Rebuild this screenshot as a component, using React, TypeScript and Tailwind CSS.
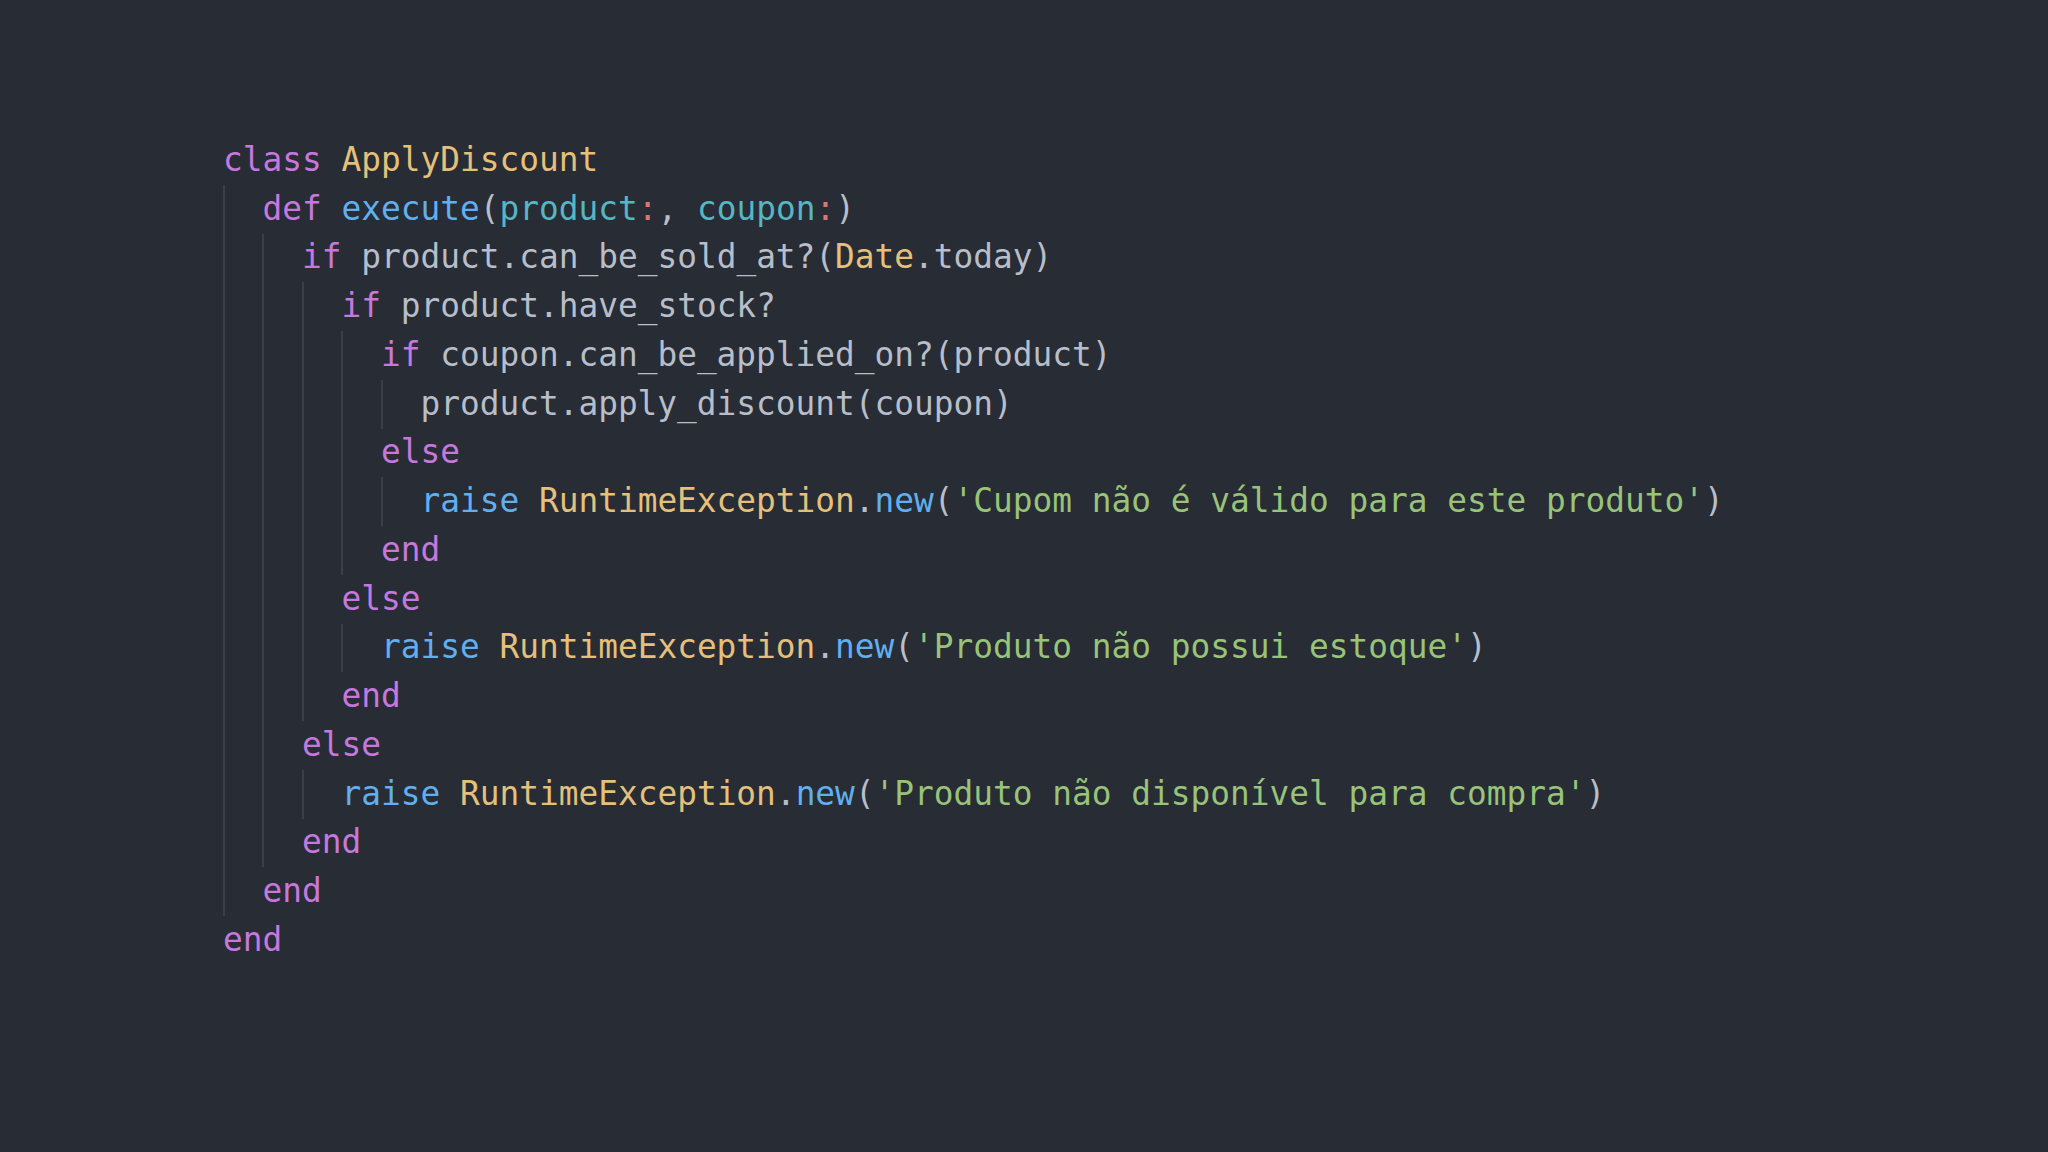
const K = "text-[#c678dd]";
const Y = "text-[#e5c07b]";
const B = "text-[#61afef]";
const T = "text-[#56b6c2]";
const R = "text-[#d9766f]";
const G = "text-[#98c379]";
const D = "text-[#b8bec9]";

type Seg = [string, string];

const lines: { indent: number; segs: Seg[] }[] = [
  { indent: 0, segs: [[K, "class "], [Y, "ApplyDiscount"]] },
  {
    indent: 1,
    segs: [
      [K, "def "],
      [B, "execute"],
      [D, "("],
      [T, "product"],
      [R, ":"],
      [D, ", "],
      [T, "coupon"],
      [R, ":"],
      [D, ")"],
    ],
  },
  {
    indent: 2,
    segs: [
      [K, "if "],
      [D, "product.can_be_sold_at?("],
      [Y, "Date"],
      [D, ".today)"],
    ],
  },
  { indent: 3, segs: [[K, "if "], [D, "product.have_stock?"]] },
  { indent: 4, segs: [[K, "if "], [D, "coupon.can_be_applied_on?(product)"]] },
  { indent: 5, segs: [[D, "product.apply_discount(coupon)"]] },
  { indent: 4, segs: [[K, "else"]] },
  {
    indent: 5,
    segs: [
      [B, "raise "],
      [Y, "RuntimeException"],
      [D, "."],
      [B, "new"],
      [D, "("],
      [G, "'Cupom não é válido para este produto'"],
      [D, ")"],
    ],
  },
  { indent: 4, segs: [[K, "end"]] },
  { indent: 3, segs: [[K, "else"]] },
  {
    indent: 4,
    segs: [
      [B, "raise "],
      [Y, "RuntimeException"],
      [D, "."],
      [B, "new"],
      [D, "("],
      [G, "'Produto não possui estoque'"],
      [D, ")"],
    ],
  },
  { indent: 3, segs: [[K, "end"]] },
  { indent: 2, segs: [[K, "else"]] },
  {
    indent: 3,
    segs: [
      [B, "raise "],
      [Y, "RuntimeException"],
      [D, "."],
      [B, "new"],
      [D, "("],
      [G, "'Produto não disponível para compra'"],
      [D, ")"],
    ],
  },
  { indent: 2, segs: [[K, "end"]] },
  { indent: 1, segs: [[K, "end"]] },
  { indent: 0, segs: [[K, "end"]] },
];

export default function App() {
  return (
    <div className="min-h-screen w-full bg-[#272c35] pt-[136px] pl-[223px] font-['DejaVu_Sans_Mono',monospace] text-[32.8px]">
      {lines.map((line, i) => (
        <div key={i} className="flex h-[48.75px] items-center whitespace-pre">
          {Array.from({ length: line.indent }).map((_, j) => (
            <span
              key={j}
              className="w-[2ch] self-stretch shrink-0 border-l-2 border-[#3a3f48]"
            />
          ))}
          {line.segs.map(([cls, text], k) => (
            <span key={k} className={cls}>
              {text}
            </span>
          ))}
        </div>
      ))}
    </div>
  );
}
